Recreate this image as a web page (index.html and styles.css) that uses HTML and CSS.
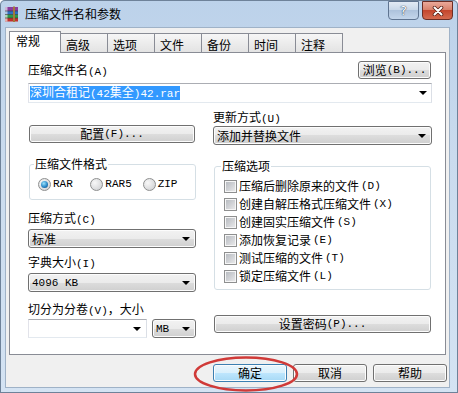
FILE: index.html
```html
<!DOCTYPE html>
<html lang="zh-CN">
<head>
    <meta charset="UTF-8">
    <title>压缩文件名和参数</title>
    <link rel="stylesheet" href="styles.css">
</head>
<body>
    <div class="window">
        <!-- Title bar -->
        <div class="titlebar">
            <svg class="app-icon" viewBox="0 0 16 16">
                <rect x="1" y="1" width="13" height="4" fill="#8a3d9c"/>
                <rect x="1" y="5" width="13" height="3.5" fill="#2f6fc4"/>
                <rect x="1" y="8.5" width="13" height="3.5" fill="#2e9a4a"/>
                <rect x="1" y="12" width="13" height="3.5" fill="#c2302a"/>
                <rect x="1" y="1" width="2.5" height="14.5" fill="#f2f2f2" opacity=".65"/>
                <path d="M1 5H14M1 8.5H14M1 12H14" stroke="#333" stroke-width=".6"/>
                <rect x="9" y="0.5" width="2" height="15.5" fill="#a07a3c"/>
            </svg>
            <span class="title">压缩文件名和参数</span>
            <div class="caption">
                <span class="cap-btn help">?</span>
                <span class="cap-btn close">
                    <svg width="12" height="10" viewBox="0 0 12 10">
                        <path d="M2.5 1.5L9.5 8.5M9.5 1.5L2.5 8.5" stroke="#5a2218" stroke-width="3.6" stroke-linecap="round"/>
                        <path d="M2.5 1.5L9.5 8.5M9.5 1.5L2.5 8.5" stroke="#fff" stroke-width="2" stroke-linecap="round"/>
                    </svg>
                </span>
            </div>
        </div>

        <div class="client">
            <!-- Tabs -->
            <div class="tabs">
                <span class="tab active">常规</span>
                <span class="tab">高级</span>
                <span class="tab">选项</span>
                <span class="tab">文件</span>
                <span class="tab">备份</span>
                <span class="tab">时间</span>
                <span class="tab">注释</span>
            </div>

            <div class="panel">
                <div class="row-name">
                    <span class="label">压缩文件名<span class="en">(A)</span></span>
                    <button class="btn browse">浏览<span class="en">(B)...</span></button>
                </div>
                <div class="combo edit name">
                    <span class="sel">深圳合租记<span class="en">(42</span>集全<span class="en">)42.rar</span></span>
                    <i class="arrow"></i>
                </div>

                <div class="columns">
                    <div class="col left">
                        <button class="btn config">配置<span class="en">(F)...</span></button>

                        <fieldset class="group fmt">
                            <legend>压缩文件格式</legend>
                            <div class="radios">
                                <span class="opt"><i class="radio checked"></i><span class="en">RAR</span></span>
                                <span class="opt"><i class="radio"></i><span class="en">RAR5</span></span>
                                <span class="opt"><i class="radio"></i><span class="en">ZIP</span></span>
                            </div>
                        </fieldset>

                        <span class="label method">压缩方式<span class="en">(C)</span></span>
                        <div class="combo list">标准<i class="arrow"></i></div>

                        <span class="label dict">字典大小<span class="en">(I)</span></span>
                        <div class="combo list"><span class="en">4096 KB</span><i class="arrow"></i></div>

                        <span class="label volume">切分为分卷<span class="en">(V)</span>，大小</span>
                        <div class="vol-row">
                            <div class="combo edit vol"><i class="arrow"></i></div>
                            <div class="combo list unit"><span class="en">MB</span><i class="arrow"></i></div>
                        </div>
                    </div>

                    <div class="col right">
                        <span class="label">更新方式<span class="en">(U)</span></span>
                        <div class="combo list">添加并替换文件<i class="arrow"></i></div>

                        <fieldset class="group opts">
                            <legend>压缩选项</legend>
                            <div class="check"><i class="box"></i>压缩后删除原来的文件<span class="en">(D)</span></div>
                            <div class="check"><i class="box"></i>创建自解压格式压缩文件<span class="en">(X)</span></div>
                            <div class="check"><i class="box"></i>创建固实压缩文件<span class="en">(S)</span></div>
                            <div class="check"><i class="box"></i>添加恢复记录<span class="en">(E)</span></div>
                            <div class="check"><i class="box"></i>测试压缩的文件<span class="en">(T)</span></div>
                            <div class="check"><i class="box"></i>锁定压缩文件<span class="en">(L)</span></div>
                        </fieldset>

                        <button class="btn password">设置密码<span class="en">(P)...</span></button>
                    </div>
                </div>
            </div>

            <!-- Dialog buttons -->
            <div class="footer">
                <button class="btn default">确定</button>
                <button class="btn">取消</button>
                <button class="btn">帮助</button>
            </div>
        </div>

        <!-- red mark drawn round the OK button -->
        <svg class="mark" width="106" height="38" viewBox="0 0 106 38">
            <ellipse cx="53" cy="19" rx="51" ry="16.5" fill="none" stroke="#d03a38" stroke-width="2.5"/>
        </svg>
    </div>
</body>
</html>
```

FILE: styles.css
```css
/* Page */
body {
    margin: 0;
    font-family: "Noto Sans CJK SC", sans-serif;
    font-size: 12px;
    line-height: 14px;
    color: #000;
    background: #fff;
}

/* Latin text in the dialog font */
.en {
    font-family: "Liberation Mono", monospace;
    font-size: 11px;
}

/* Aero window frame */
.window {
    position: relative;
    width: 458px;
    height: 393px;
    box-sizing: border-box;
    padding: 0 8px 5px 5px;
    background: linear-gradient(#bcd2ea, #cadbee 40%, #d4e3f3);
    box-shadow: inset 0 0 0 1px #6e8299;
    border-radius: 5px 5px 0 0;
    overflow: hidden;
}

.titlebar {
    display: flex;
    align-items: center;
    height: 27px;
    margin: 0 -8px 0 -5px;
    padding-left: 4px;
}

.app-icon {
    width: 16px;
    height: 16px;
    margin-right: 5px;
}

.caption {
    display: flex;
    gap: 3px;
    align-self: flex-start;
    margin: 1px 5px 0 auto;
}

.cap-btn {
    width: 31px;
    height: 19px;
    box-sizing: border-box;
    display: flex;
    align-items: center;
    justify-content: center;
    border-radius: 0 0 4px 4px;
}

.cap-btn.help {
    border: 1px solid #5f7490;
    background: linear-gradient(#e2eaf4, #c9d8e9 45%, #aec3dc 50%, #c4d6eb);
    color: #fff;
    font-family: "DejaVu Sans", sans-serif;
    font-size: 13px;
    text-shadow: 0 0 1px #2c3e55, 0 0 1px #2c3e55;
}

.cap-btn.close {
    border: 1px solid #6b2d24;
    background: linear-gradient(#eaa99a, #d9826c 45%, #c4462d 50%, #d46a4f);
}

/* Client area */
.client {
    height: 361px;
    box-sizing: border-box;
    border: 1px solid #9fb2c7;
    background: #f0f0f0;
    padding: 3px 3px 0;
}

/* Tabs */
.tabs {
    display: flex;
    align-items: flex-end;
    height: 22px;
    position: relative;
    z-index: 1;
}

.tab {
    box-sizing: border-box;
    width: 48px;
    height: 19px;
    margin: 0 0 1px -1px;
    padding: 4px 0 0 5px;
    border: 1px solid #898c95;
    border-bottom: 0;
    background: linear-gradient(#f6f6f6, #e3e3e3);
}

.tab.active {
    position: relative;
    z-index: 2;
    width: 52px;
    height: 22px;
    margin: 0;
    padding: 2px 0 0 6px;
    background: #fff;
}

.panel {
    box-sizing: border-box;
    height: 303px;
    margin-top: -1px;
    padding: 8px 13px 0 18px;
    border: 1px solid #898c95;
    background: #fff;
}

.row-name {
    display: flex;
    justify-content: space-between;
    align-items: flex-end;
    height: 18px;
}

.columns {
    display: flex;
    gap: 17px;
    margin-top: 7px;
}

.col {
    display: flex;
    flex-direction: column;
}

.col.left {
    width: 168px;
}

.col.right {
    width: 219px;
}

/* Buttons */
.btn {
    box-sizing: border-box;
    height: 18px;
    padding: 0;
    display: flex;
    align-items: center;
    justify-content: center;
    font: inherit;
    color: #000;
    border: 1px solid #707070;
    border-radius: 3px;
    background: linear-gradient(#f2f2f2, #ebebeb 50%, #dddddd 50%, #cfcfcf);
    box-shadow: inset 0 0 0 1px #fcfcfc;
}

.btn.default {
    border-color: #3c7fb1;
    background: linear-gradient(#eaf6fd, #d9f0fc 50%, #bee6fd 50%, #a7d9f5);
}

.btn.browse {
    width: 73px;
    margin-right: 1px;
}

.btn.config {
    margin: 15px 1px 0;
}

.btn.password {
    margin: 25px 1px 0;
}

/* Combo boxes */
.combo {
    display: flex;
    align-items: center;
    box-sizing: border-box;
    height: 19px;
}

.combo.list {
    padding-left: 3px;
    border: 1px solid #707070;
    border-radius: 3px;
    background: linear-gradient(#f2f2f2, #ebebeb 50%, #dddddd 50%, #cfcfcf);
    box-shadow: inset 0 0 0 1px #fcfcfc;
}

.combo.edit {
    border: 1px solid #abadb3;
    border-color: #abadb3 #dbdfe6 #e3e9ef #e2e3ea;
    background: #fff;
}

.combo.name {
    height: 20px;
    margin-top: 4px;
    padding-left: 1px;
}

.sel {
    display: inline-block;
    line-height: 12px;
    background: #3399ff;
    color: #fff;
}

.arrow {
    width: 0;
    height: 0;
    margin: 0 5px 0 auto;
    border-left: 4px solid transparent;
    border-right: 4px solid transparent;
    border-top: 4px solid #000;
}

.combo.name .arrow {
    margin-right: 4px;
}

.vol-row {
    display: flex;
    gap: 5px;
    margin-top: 1px;
}

.combo.vol {
    width: 119px;
}

.combo.unit {
    width: 44px;
}

/* Labels */
.label.method {
    margin-top: 11px;
}

.label.dict {
    margin-top: 7px;
}

.label.volume {
    margin-top: 10px;
}

.label + .combo {
    margin-top: 2px;
}

.label.volume + .vol-row {
    margin-top: 1px;
}

.col.right .label + .combo {
    margin-top: 0;
}

/* Group boxes */
.group {
    margin: 14px 0 0;
    border: 1px solid #d5dfe5;
    border-radius: 3px;
    min-width: 0;
}

.group legend {
    padding: 0 1px;
}

.group.fmt {
    margin-left: 1px;
    padding: 6px 0 8px 8px;
}

.group.fmt legend {
    margin-left: -4px;
}

.group.opts {
    margin-left: 1px;
    margin-right: 1px;
    padding: 4px 0 4px 9px;
}

.group.opts legend {
    margin-left: -3px;
}

.radios {
    display: flex;
    align-items: center;
    height: 14px;
}

.opt {
    display: flex;
    align-items: center;
    gap: 2px;
    width: 53px;
}

.radio {
    display: block;
    width: 13px;
    height: 13px;
    box-sizing: border-box;
    border: 1px solid #8e8f8f;
    border-radius: 50%;
    background: radial-gradient(circle at 35% 35%, #f8f8f8, #d8d9db 70%, #bfc1c4);
}

.radio.checked::after {
    content: "";
    display: block;
    width: 7px;
    height: 7px;
    margin: 2px;
    border-radius: 50%;
    background: radial-gradient(circle at 40% 35%, #9ae3fc, #2a88c8 55%, #0e3e6c);
}

.check {
    display: flex;
    align-items: center;
    gap: 2px;
    height: 18px;
}

.box {
    display: block;
    width: 13px;
    height: 13px;
    box-sizing: border-box;
    border: 1px solid #8e8f8f;
    background: linear-gradient(135deg, #b3b7bd, #ececed);
    box-shadow: inset 0 0 0 1px #f6f6f6;
}

/* Bottom buttons */
.footer {
    display: flex;
    justify-content: flex-end;
    gap: 6px;
    margin: 9px -1px 0 0;
}

.footer .btn {
    width: 74px;
}

/* Red ellipse over the OK button */
.mark {
    position: absolute;
    left: 193px;
    top: 355px;
}
```
